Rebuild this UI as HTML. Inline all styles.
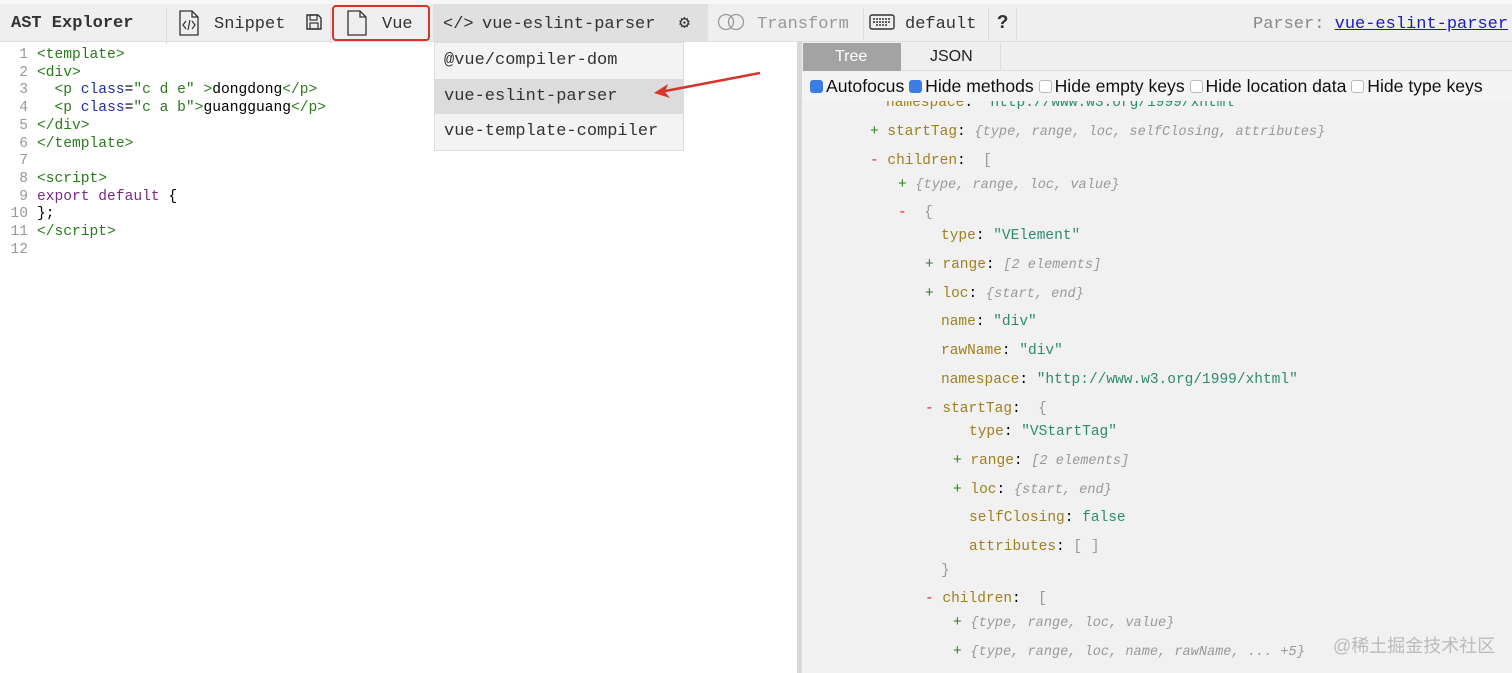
<!DOCTYPE html>
<html><head><meta charset="utf-8"><style>
*{margin:0;padding:0;box-sizing:border-box}
body{width:1512px;height:673px;overflow:hidden;background:#fff;font-family:"Liberation Mono",monospace;position:relative}
.a{position:absolute;white-space:pre}
#tb{position:absolute;left:0;top:0;width:1512px;height:42px;background:#efefef;border-top:4px solid #f7f7f7;border-bottom:1px solid #ddd}
.tbt{position:absolute;top:11px;font-size:17px;color:#333}
.sep{position:absolute;top:4px;width:1px;height:36px;background:#ddd}
.code{font-size:14.6px;line-height:17.7px}
.ln{color:#999;text-align:right;width:28px;left:0}
.tg{color:#2a7a1c}.at{color:#1f2fa0}.st{color:#a01a1a}.kw{color:#7a2a8a}
#rp{position:absolute;left:802px;top:42px;width:710px;height:631px;background:#f1f1f1}
.t{font-size:14.5px}
.k{color:#a0801e}.s{color:#2e8c6e}.g{color:#999;font-style:italic;font-size:13.6px}.b{color:#999}
.p{color:#2e7d1e}.m{color:#d22}
.cb{display:inline-block;width:13px;height:13px;border-radius:3px;vertical-align:-1px;margin-right:3px}
</style></head><body>
<div id="tb">
<div class="tbt" style="left:11px;top:10px;font-weight:bold;font-size:17px">AST Explorer</div>
<div class="sep" style="left:166px"></div>
<svg class="a" style="left:178px;top:6px" width="22" height="26" viewBox="0 0 22 26"><path d="M2 1h12l6 6v18H2z M14 1v6h6" fill="none" stroke="#333" stroke-width="1.3"/><path d="M8 11l-3 4 3 4M14 11l3 4-3 4M12 10l-2 10" fill="none" stroke="#333" stroke-width="1.2"/></svg>
<div class="tbt" style="left:214px">Snippet</div>
<svg class="a" style="left:306px;top:10px" width="16" height="16" viewBox="0 0 16 16"><path d="M1 1h11l3 3v11H1z" fill="none" stroke="#333" stroke-width="1.4"/><rect x="4" y="1" width="7" height="5" fill="none" stroke="#333" stroke-width="1.2"/><rect x="4" y="9" width="8" height="6" fill="none" stroke="#333" stroke-width="1.2"/></svg>
<div class="sep" style="left:330px"></div>
<div class="a" style="left:332px;top:1px;width:98px;height:36px;border:2.5px solid #d9342b;border-radius:4px"></div>
<svg class="a" style="left:346px;top:6px" width="22" height="26" viewBox="0 0 22 26"><path d="M2 1h12l6 6v18H2z M14 1v6h6" fill="none" stroke="#333" stroke-width="1.3"/></svg>
<div class="tbt" style="left:382px">Vue</div>
<div class="a" style="left:433px;top:0;width:275px;height:37px;background:#e0e0e0"></div>
<div class="tbt" style="left:443px">&lt;/&gt;</div>
<div class="tbt" style="left:482px">vue-eslint-parser</div>
<div class="tbt" style="left:679px;font-size:18px;top:8px">⚙</div>
<svg class="a" style="left:717px;top:9px" width="30" height="18" viewBox="0 0 30 18"><circle cx="9" cy="9" r="7.5" fill="none" stroke="#999" stroke-width="1.3"/><circle cx="19" cy="9" r="7.5" fill="none" stroke="#999" stroke-width="1.3"/></svg>
<div class="tbt" style="left:757px;color:#999">Transform</div>
<div class="sep" style="left:863px"></div>
<svg class="a" style="left:869px;top:10px" width="26" height="16" viewBox="0 0 26 16"><rect x="1" y="1" width="24" height="14" rx="2" fill="none" stroke="#333" stroke-width="1.4"/><path d="M4 5h18M4 8h18M7 11h12" stroke="#333" stroke-width="1.5" stroke-dasharray="2 1"/></svg>
<div class="tbt" style="left:905px">default</div>
<div class="sep" style="left:988px"></div>
<div class="tbt" style="left:997px;font-weight:bold;font-size:19px;top:8px">?</div>
<div class="sep" style="left:1016px"></div>
<div class="tbt" style="left:1253px;color:#888">Parser: <span style="color:#1a1ac8;text-decoration:underline">vue-eslint-parser</span></div>
</div>

<div class="a code ln" style="top:47px;line-height:17.7px">1
2
3
4
5
6
7
8
9
10
11
12</div>
<div class="a code" style="left:37px;top:47px"><span class="tg">&lt;template&gt;</span>
<span class="tg">&lt;div&gt;</span>
  <span class="tg">&lt;p</span> <span class="at">class</span>=<span class="tg">"c d e"</span> <span class="tg">&gt;</span>dongdong<span class="tg">&lt;/p&gt;</span>
  <span class="tg">&lt;p</span> <span class="at">class</span>=<span class="tg">"c a b"</span><span class="tg">&gt;</span>guangguang<span class="tg">&lt;/p&gt;</span>
<span class="tg">&lt;/div&gt;</span>
<span class="tg">&lt;/template&gt;</span>

<span class="tg">&lt;script&gt;</span>
<span class="kw">export default</span> {
};
<span class="tg">&lt;/script&gt;</span>
</div>

<div class="a" style="left:434px;top:42px;width:250px;height:109px;background:#f3f3f3;border:1px solid #ddd"></div>
<div class="a" style="left:435px;top:79px;width:248px;height:35px;background:#dcdcdc"></div>
<div class="a" style="left:444px;top:51px;font-size:17px;color:#333">@vue/compiler-dom</div>
<div class="a" style="left:444px;top:87px;font-size:17px;color:#333">vue-eslint-parser</div>
<div class="a" style="left:444px;top:122px;font-size:17px;color:#333">vue-template-compiler</div>
<svg class="a" style="left:650px;top:68px" width="115" height="32" viewBox="0 0 115 32"><path d="M110 5L10 24" stroke="#d9342b" stroke-width="2.5"/><path d="M4 25l14-9-3 8 5 6z" fill="#d9342b"/></svg>

<div class="a" style="left:797px;top:42px;width:5px;height:631px;background:#d8d8d8"></div>
<div id="rp">
<div class="a" style="left:0;top:0;width:710px;height:29px;background:#efefef;border-bottom:1px solid #ddd"></div>
<div class="a" style="left:1px;top:1px;width:98px;height:28px;background:#a3a3a3"></div>
<div class="a" style="left:33px;top:6px;font-family:'Liberation Sans',sans-serif;font-size:16px;color:#fff">Tree</div>
<div class="a" style="left:128px;top:6px;font-family:'Liberation Sans',sans-serif;font-size:16px;color:#222">JSON</div>
<div class="a" style="left:198px;top:1px;width:1px;height:28px;background:#ddd"></div>
<div class="a" style="left:0;top:30px;width:710px;height:29px;background:#f4f4f4"></div>
<div class="a" style="left:8px;top:34px;font-family:'Liberation Sans',sans-serif;font-size:17.6px;color:#111"><span class="cb" style="background:#3b7de0"></span>Autofocus <span class="cb" style="background:#3b7de0"></span>Hide methods <span class="cb" style="background:#fff;border:1px solid #bbb"></span>Hide empty keys <span class="cb" style="background:#fff;border:1px solid #bbb"></span>Hide location data <span class="cb" style="background:#fff;border:1px solid #bbb"></span>Hide type keys</div>
</div>
<div class="a t" style="left:886px;top:95px;clip-path:inset(6px 0 0 0)"><span class="k">namespace</span>: <span class="s">"http://www.w3.org/1999/xhtml"</span></div>
<div class="a t" style="left:870px;top:124px"><span class="p">+</span> <span class="k">startTag</span>: <span class="g">{type, range, loc, selfClosing, attributes}</span></div>
<div class="a t" style="left:870px;top:153px"><span class="m">-</span> <span class="k">children</span>:  <span class="b">[</span></div>
<div class="a t" style="left:898px;top:177px"><span class="p">+</span> <span class="g">{type, range, loc, value}</span></div>
<div class="a t" style="left:898px;top:205px"><span class="m">-</span>  <span class="b">{</span></div>
<div class="a t" style="left:941px;top:228px"><span class="k">type</span>: <span class="s">"VElement"</span></div>
<div class="a t" style="left:925px;top:257px"><span class="p">+</span> <span class="k">range</span>: <span class="g">[2 elements]</span></div>
<div class="a t" style="left:925px;top:286px"><span class="p">+</span> <span class="k">loc</span>: <span class="g">{start, end}</span></div>
<div class="a t" style="left:941px;top:314px"><span class="k">name</span>: <span class="s">"div"</span></div>
<div class="a t" style="left:941px;top:343px"><span class="k">rawName</span>: <span class="s">"div"</span></div>
<div class="a t" style="left:941px;top:372px"><span class="k">namespace</span>: <span class="s">"http://www.w3.org/1999/xhtml"</span></div>
<div class="a t" style="left:925px;top:401px"><span class="m">-</span> <span class="k">startTag</span>:  <span class="b">{</span></div>
<div class="a t" style="left:969px;top:424px"><span class="k">type</span>: <span class="s">"VStartTag"</span></div>
<div class="a t" style="left:953px;top:453px"><span class="p">+</span> <span class="k">range</span>: <span class="g">[2 elements]</span></div>
<div class="a t" style="left:953px;top:482px"><span class="p">+</span> <span class="k">loc</span>: <span class="g">{start, end}</span></div>
<div class="a t" style="left:969px;top:510px"><span class="k">selfClosing</span>: <span class="s">false</span></div>
<div class="a t" style="left:969px;top:539px"><span class="k">attributes</span>: <span class="b">[ ]</span></div>
<div class="a t" style="left:941px;top:563px"><span class="b">}</span></div>
<div class="a t" style="left:925px;top:591px"><span class="m">-</span> <span class="k">children</span>:  <span class="b">[</span></div>
<div class="a t" style="left:953px;top:615px"><span class="p">+</span> <span class="g">{type, range, loc, value}</span></div>
<div class="a t" style="left:953px;top:644px"><span class="p">+</span> <span class="g">{type, range, loc, name, rawName, ... +5}</span></div>
<div class="a" style="left:1333px;top:632px;font-family:'Liberation Sans','Noto Sans CJK SC',sans-serif;font-size:18px;color:#bbb">@稀土掘金技术社区</div>
</body></html>
